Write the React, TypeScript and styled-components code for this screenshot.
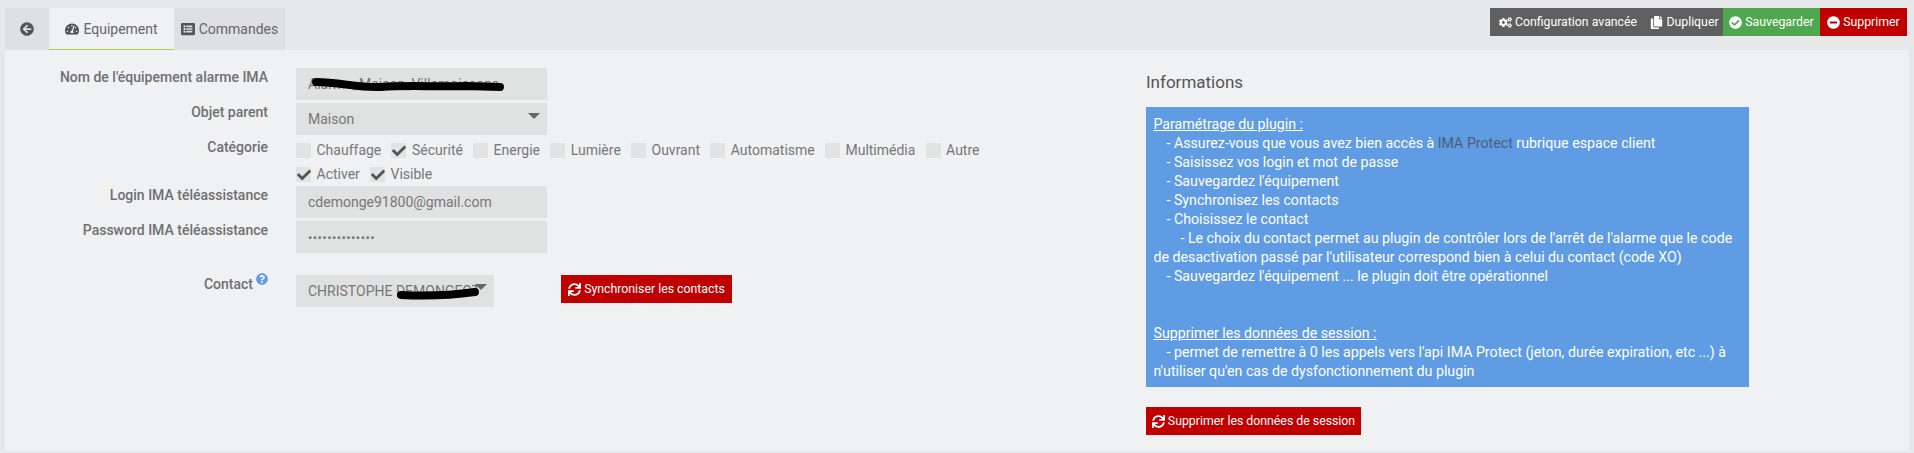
import { ReactNode } from "react";
import styled, { createGlobalStyle } from "styled-components";
import {
  FaArrowCircleLeft,
  FaTachometerAlt,
  FaListAlt,
  FaCogs,
  FaCopy,
  FaCheckCircle,
  FaMinusCircle,
  FaSync,
  FaCheck,
  FaQuestionCircle,
} from "react-icons/fa";

const GlobalStyle = createGlobalStyle`
  html, body {
    margin: 0;
    background: #e7e8e9;
  }
  body {
    font-family: Roboto, "Liberation Sans", sans-serif;
    font-size: 14px;
    color: #666;
  }
`;

const Page = styled.div`
  width: 1914px;
  height: 453px;
  overflow: hidden;
  display: flex;
  flex-direction: column;
  padding: 8px 5px 2px 5px;
  box-sizing: border-box;
`;

const TopBar = styled.div`
  display: flex;
  justify-content: space-between;
  height: 42px;
  flex-shrink: 0;
`;

const Tabs = styled.div`
  display: flex;
  height: 42px;
`;

const Tab = styled.div<{ $active?: boolean; $width: number }>`
  width: ${(p) => p.$width}px;
  height: 42px;
  box-sizing: border-box;
  display: flex;
  align-items: center;
  justify-content: center;
  gap: 4px;
  background: ${(p) => (p.$active ? "#eff1f3" : "#dfe0e1")};
  border-bottom: ${(p) => (p.$active ? "1px solid #a3d04f" : "none")};
  color: #666;
  svg {
    color: #555;
    font-size: 14px;
  }
`;

const Actions = styled.div`
  display: flex;
  height: 28px;
  margin-right: 2px;
`;

const ActionButton = styled.div<{ $bg: string; $width: number }>`
  width: ${(p) => p.$width}px;
  display: flex;
  align-items: center;
  justify-content: center;
  gap: 3px;
  background: ${(p) => p.$bg};
  color: #fff;
  font-size: 12.3px;
  svg {
    font-size: 13px;
  }
`;

const Panel = styled.div`
  flex: 1;
  background: #eff1f3;
  display: flex;
`;

const FormColumn = styled.div`
  width: 1141px;
  flex-shrink: 0;
  padding-top: 18px;
  box-sizing: border-box;
`;

const Row = styled.div<{ $height: number }>`
  display: flex;
  height: ${(p) => p.$height}px;
`;

const Label = styled.div`
  width: 263px;
  flex-shrink: 0;
  text-align: right;
  font-weight: 500;
  color: #707070;
  line-height: 18px;
`;

const HelpMark = styled.span`
  color: #5f9ce4;
  font-size: 12px;
  margin-left: 3px;
  position: relative;
  top: -4px;
`;

const Field = styled.div`
  margin-left: 28px;
  flex: 1;
  display: flex;
  align-items: flex-start;
`;

const Input = styled.div<{ $width?: number }>`
  position: relative;
  width: ${(p) => p.$width ?? 251}px;
  height: 32px;
  box-sizing: border-box;
  background: #e0e1e1;
  color: #777;
  padding: 0 12px;
  line-height: 33px;
  white-space: nowrap;
  overflow: hidden;
`;

const Dots = styled.span`
  font-size: 13px;
  letter-spacing: 0.4px;
`;

const SelectArrow = styled.span<{ $top: number }>`
  position: absolute;
  right: 7px;
  top: ${(p) => p.$top}px;
  width: 0;
  height: 0;
  border-left: 6px solid transparent;
  border-right: 6px solid transparent;
  border-top: 6px solid #666;
`;

const Scribble = styled.svg`
  position: absolute;
  left: 0;
  top: 0;
  pointer-events: none;
`;

const CheckGroup = styled.div<{ $top: number }>`
  display: flex;
  flex-wrap: nowrap;
  align-items: center;
  height: 15px;
  margin-top: ${(p) => p.$top}px;
`;

const CheckItem = styled.label`
  display: flex;
  align-items: center;
  margin-right: 10.2px;
  color: #777;
  line-height: 15px;
`;

const Box = styled.span`
  width: 15px;
  height: 15px;
  margin-right: 5.5px;
  background: #e2e3e3;
  display: flex;
  align-items: center;
  justify-content: center;
  color: #555;
  font-size: 14px;
`;

const SyncButton = styled.div<{ $width: number; $offset?: number }>`
  width: ${(p) => p.$width}px;
  height: 28px;
  margin-left: ${(p) => p.$offset ?? 0}px;
  display: flex;
  align-items: center;
  justify-content: center;
  gap: 3px;
  background: #c00000;
  color: #fff;
  font-size: 12.3px;
  flex-shrink: 0;
  svg {
    font-size: 13px;
  }
`;

const InfoColumn = styled.div`
  width: 603px;
  display: flex;
  flex-direction: column;
  align-items: flex-start;
`;

const InfoTitle = styled.h3`
  margin: 21px 0 0 0;
  height: 36px;
  font-size: 17px;
  line-height: 22px;
  font-weight: 400;
  color: #555;
`;

const InfoBox = styled.div`
  width: 603px;
  height: 280px;
  box-sizing: border-box;
  padding: 8px 7px 0 7.5px;
  background: #5f9ce4;
  color: #fff;
  font-size: 14.2px;
  line-height: 19px;
  margin-bottom: 20px;
`;

const Heading = styled.span`
  text-decoration: underline;
`;

const Muted = styled.span`
  color: #4c5f78;
`;

const Line = styled.div<{ $indent?: number }>`
  min-height: 19px;
  padding-left: ${(p) => p.$indent ?? 0}px;
`;

const categories: [string, boolean][] = [
  ["Chauffage", false],
  ["Sécurité", true],
  ["Energie", false],
  ["Lumière", false],
  ["Ouvrant", false],
  ["Automatisme", false],
  ["Multimédia", false],
  ["Autre", false],
];

function Check({ label, checked }: { label: string; checked?: boolean }) {
  return (
    <CheckItem>
      <Box>{checked && <FaCheck />}</Box>
      {label}
    </CheckItem>
  );
}

function FormRow({
  label,
  height,
  children,
}: {
  label: ReactNode;
  height: number;
  children: ReactNode;
}) {
  return (
    <Row $height={height}>
      <Label>{label}</Label>
      <Field>{children}</Field>
    </Row>
  );
}

export default function App() {
  return (
    <>
      <GlobalStyle />
      <Page>
        <TopBar>
          <Tabs>
            <Tab $width={44}>
              <FaArrowCircleLeft />
            </Tab>
            <Tab $width={125} $active>
              <FaTachometerAlt />
              Equipement
            </Tab>
            <Tab $width={111}>
              <FaListAlt />
              Commandes
            </Tab>
          </Tabs>
          <Actions>
            <ActionButton $bg="#5f5f5f" $width={156}>
              <FaCogs />
              Configuration avancée
            </ActionButton>
            <ActionButton $bg="#5f5f5f" $width={77}>
              <FaCopy />
              Dupliquer
            </ActionButton>
            <ActionButton $bg="#4fa84f" $width={97}>
              <FaCheckCircle />
              Sauvegarder
            </ActionButton>
            <ActionButton $bg="#c00000" $width={87}>
              <FaMinusCircle />
              Supprimer
            </ActionButton>
          </Actions>
        </TopBar>
        <Panel>
          <FormColumn>
            <FormRow label="Nom de l'équipement alarme IMA" height={35}>
              <Input>
                Alarme_Maison_Villemoissons
                <Scribble width="251" height="32">
                  <path
                    d="M20 14 C45 14 60 20 85 19 C110 17 140 19 170 18 L204 19"
                    stroke="#000"
                    strokeWidth="8"
                    strokeLinecap="round"
                    fill="none"
                  />
                </Scribble>
              </Input>
            </FormRow>
            <FormRow label="Objet parent" height={35}>
              <Input>
                Maison
                <SelectArrow $top={10} />
              </Input>
            </FormRow>
            <FormRow label="Catégorie" height={25}>
              <CheckGroup $top={5}>
                {categories.map(([name, on]) => (
                  <Check key={name} label={name} checked={on} />
                ))}
              </CheckGroup>
            </FormRow>
            <FormRow label="" height={23}>
              <CheckGroup $top={4}>
                <Check label="Activer" checked />
                <Check label="Visible" checked />
              </CheckGroup>
            </FormRow>
            <FormRow label="Login IMA téléassistance" height={35}>
              <Input>cdemonge91800@gmail.com</Input>
            </FormRow>
            <FormRow label="Password IMA téléassistance" height={54}>
              <Input>
                <Dots>••••••••••••••</Dots>
              </Input>
            </FormRow>
            <FormRow
              label={
                <>
                  Contact
                  <HelpMark>
                    <FaQuestionCircle />
                  </HelpMark>
                </>
              }
              height={32}
            >
              <Input $width={198}>
                CHRISTOPHE DEMONGEOT
                <SelectArrow $top={9} />
                <Scribble width="198" height="32">
                  <path
                    d="M105 20 C125 21 150 21 179 17"
                    stroke="#000"
                    strokeWidth="8"
                    strokeLinecap="round"
                    fill="none"
                  />
                </Scribble>
              </Input>
              <SyncButton $width={171} $offset={67}>
                <FaSync />
                Synchroniser les contacts
              </SyncButton>
            </FormRow>
          </FormColumn>
          <InfoColumn>
            <InfoTitle>Informations</InfoTitle>
            <InfoBox>
              <Line>
                <Heading>Paramétrage du plugin :</Heading>
              </Line>
              <Line $indent={13}>
                - Assurez-vous que vous avez bien accès à <Muted>IMA Protect</Muted> rubrique espace client
              </Line>
              <Line $indent={13}>- Saisissez vos login et mot de passe</Line>
              <Line $indent={13}>- Sauvegardez l'équipement</Line>
              <Line $indent={13}>- Synchronisez les contacts</Line>
              <Line $indent={13}>- Choisissez le contact</Line>
              <Line $indent={27}>
                - Le choix du contact permet au plugin de contrôler lors de l'arrêt de l'alarme que le code
              </Line>
              <Line>de desactivation passé par l'utilisateur correspond bien à celui du contact (code XO)</Line>
              <Line $indent={13}>- Sauvegardez l'équipement ... le plugin doit être opérationnel</Line>
              <Line />
              <Line />
              <Line>
                <Heading>Supprimer les données de session :</Heading>
              </Line>
              <Line $indent={13}>
                - permet de remettre à 0 les appels vers l'api IMA Protect (jeton, durée expiration, etc ...) à
              </Line>
              <Line>n'utiliser qu'en cas de dysfonctionnement du plugin</Line>
            </InfoBox>
            <SyncButton $width={215}>
              <FaSync />
              Supprimer les données de session
            </SyncButton>
          </InfoColumn>
        </Panel>
      </Page>
    </>
  );
}
